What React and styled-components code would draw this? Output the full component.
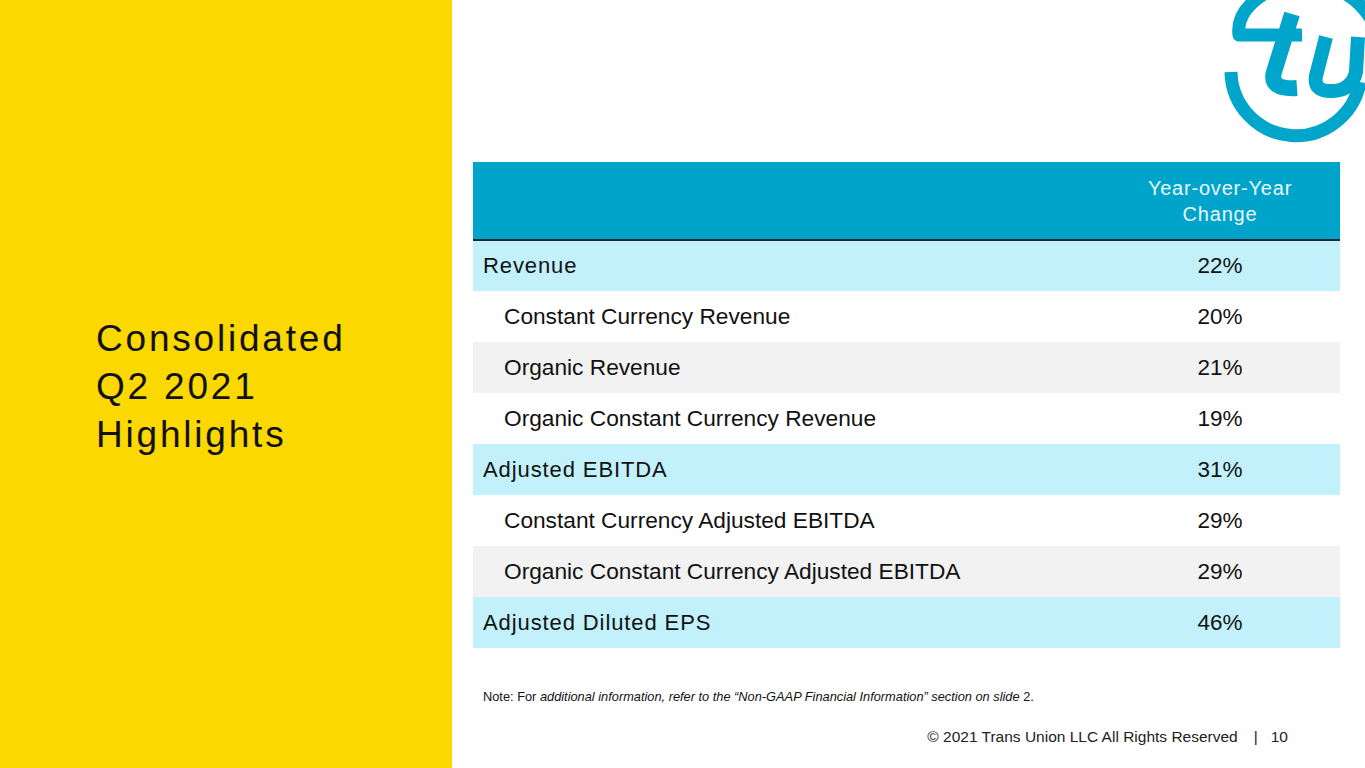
import React from "react";
import styled, { createGlobalStyle } from "styled-components";

const Global = createGlobalStyle`
  html, body { margin: 0; padding: 0; background: #ffffff; }
  body { font-family: "Liberation Sans", Arial, sans-serif; color: #111; }
`;

const Slide = styled.div`
  position: relative;
  display: flex;
  width: 1365px;
  height: 768px;
  overflow: hidden;
  background: #ffffff;
`;

const Sidebar = styled.aside`
  width: 452px;
  flex: none;
  background: #fbd800;
  display: flex;
  flex-direction: column;
  justify-content: center;
  padding: 6px 0 0 96px;
  box-sizing: border-box;
`;

const Title = styled.h1`
  margin: 0;
  font-weight: 400;
  font-size: 37px;
  line-height: 48px;
  letter-spacing: 2.8px;
  color: #111;
`;

const Main = styled.main`
  flex: 1;
  display: flex;
  flex-direction: column;
  padding: 162px 25px 0 21px;
`;

const Table = styled.table`
  width: 867px;
  border-collapse: collapse;
  table-layout: fixed;
`;

const HeadRow = styled.tr`
  height: 78px;
  background: #00a4ca;
  border-bottom: 2px solid #1b2a30;
`;

const HeadCell = styled.th`
  padding: 0;
  font-weight: 400;
  font-size: 20px;
  line-height: 26px;
  letter-spacing: 0.8px;
  color: #eaf7fb;
  text-align: center;
  width: ${(p) => (p.$value ? "240px" : "auto")};
`;

const Row = styled.tr`
  height: 51px;
  background: ${(p) => p.$bg};
`;

const LabelCell = styled.td`
  padding: 0 0 0 ${(p) => (p.$main ? "10px" : "31px")};
  font-size: ${(p) => (p.$main ? "22px" : "22.7px")};
  letter-spacing: ${(p) => (p.$main ? "0.9px" : "0")};
  color: #111;
  white-space: nowrap;
`;

const ValueCell = styled.td`
  padding: 0;
  text-align: center;
  font-size: 22.5px;
  color: #111;
`;

const Note = styled.p`
  margin: 42px 0 0 10px;
  font-size: 12.8px;
  line-height: 14px;
  color: #111;
`;

const Footer = styled.footer`
  margin: 24px 52px 0 0;
  align-self: flex-end;
  font-size: 15.5px;
  line-height: 18px;
  color: #222;
  display: flex;
  align-items: center;
`;

const Sep = styled.span`
  margin: 0 13px 0 16px;
`;

const Logo = styled.svg`
  position: absolute;
  top: 0;
  right: 0;
  width: 150px;
  height: 145px;
`;

const rows = [
  { label: "Revenue", value: "22%", main: true, bg: "#c2f1fc" },
  { label: "Constant Currency Revenue", value: "20%", bg: "#ffffff" },
  { label: "Organic Revenue", value: "21%", bg: "#f2f2f2" },
  { label: "Organic Constant Currency Revenue", value: "19%", bg: "#ffffff" },
  { label: "Adjusted EBITDA", value: "31%", main: true, bg: "#c2f1fc" },
  { label: "Constant Currency Adjusted EBITDA", value: "29%", bg: "#ffffff" },
  { label: "Organic Constant Currency Adjusted EBITDA", value: "29%", bg: "#f2f2f2" },
  { label: "Adjusted Diluted EPS", value: "46%", main: true, bg: "#c2f1fc" },
];

function TuLogo() {
  const c = "#00a5cb";
  return (
    <Logo viewBox="1215 0 150 145" aria-label="TransUnion logo">
      <g fill="none" stroke={c} strokeLinejoin="round">
        <path d="M1231,72 A65,65 0 0 0 1360,82" strokeWidth="13" />
        <path d="M1264,-6 C1245,6 1237,20 1239,35 L1302,35" strokeWidth="13" />
        <path d="M1374,24 Q1363,4 1346,-6" strokeWidth="13" />
        <path d="M1292,14 L1274,72 Q1269,90 1297,88" strokeWidth="16" />
        <path d="M1326,37 L1316,76 Q1313,92 1333,91 Q1352,90 1356,72 L1358,37" strokeWidth="14" />
      </g>
    </Logo>
  );
}

export default function App() {
  return (
    <>
      <Global />
      <Slide>
        <Sidebar>
          <Title>
            Consolidated
            <br />
            Q2 2021
            <br />
            Highlights
          </Title>
        </Sidebar>
        <Main>
          <Table>
            <thead>
              <HeadRow>
                <HeadCell />
                <HeadCell $value>
                  Year-over-Year
                  <br />
                  Change
                </HeadCell>
              </HeadRow>
            </thead>
            <tbody>
              {rows.map((r) => (
                <Row key={r.label} $bg={r.bg}>
                  <LabelCell $main={r.main}>{r.label}</LabelCell>
                  <ValueCell>{r.value}</ValueCell>
                </Row>
              ))}
            </tbody>
          </Table>
          <Note>
            Note: For{" "}
            <i>
              additional information, refer to the “Non-GAAP Financial Information” section on slide
            </i>{" "}
            2.
          </Note>
          <Footer>
            <span>© 2021 Trans Union LLC All Rights Reserved</span>
            <Sep>|</Sep>
            <span>10</span>
          </Footer>
        </Main>
        <TuLogo />
      </Slide>
    </>
  );
}
